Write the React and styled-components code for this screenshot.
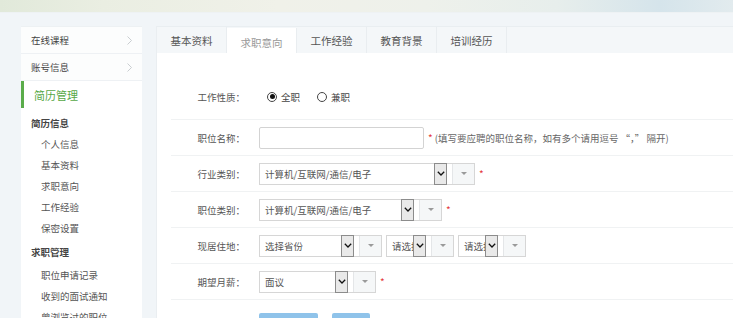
import React from "react";
import styled, { createGlobalStyle } from "styled-components";

const Global = createGlobalStyle`
  html, body {
    margin: 0;
    padding: 0;
    overflow: hidden;
    background: #f1f5f8;
    font-family: "Noto Sans CJK SC", "Noto Sans", sans-serif;
    color: #555;
  }
`;

const Banner = styled.div`
  height: 12px;
  background: linear-gradient(90deg, #e1e9da 0%, #eaeee2 14%, #f0f1e9 38%, #eef1eb 58%, #e7eeec 76%, #d5e4eb 90%, #e2ebee 100%);
  border-bottom: 1px solid #eef2f4;
`;

const Page = styled.div`
  display: flex;
  align-items: flex-start;
  gap: 14px;
  padding: 13px 0 0 21px;
`;

const Side = styled.div`
  width: 121px;
  flex: none;
  background: #fff;
  height: 320px;
  border-top: 1px solid #edf1f3;
`;

const NavRow = styled.div`
  display: flex;
  align-items: center;
  justify-content: space-between;
  height: 26px;
  padding: 0 10px;
  border-bottom: 1px solid #eef1f4;
  font-size: 9.5px;
  color: #444;
  background: #fcfdfd;
`;

const ActiveRow = styled.div`
  height: 27px;
  display: flex;
  align-items: center;
  padding-left: 10px;
  border-left: 3px solid #5aac4a;
  font-size: 11px;
  color: #56a846;
`;

const SideTitle = styled.div`
  height: 22px;
  line-height: 22px;
  margin-top: ${(p) => p.$mt || 0}px;
  padding-left: 10px;
  font-size: 9.5px;
  font-weight: bold;
  color: #444;
`;

const SideGroup = styled.div`
  margin-top: ${(p) => p.$mt || 0}px;
`;

const SideItem = styled.div`
  height: 21px;
  line-height: 21px;
  padding-left: 20px;
  font-size: 9.5px;
  color: #555;
  white-space: nowrap;
`;

const Main = styled.div`
  flex: 1;
  min-width: 0;
  background: #fff;
  height: 320px;
  border-left: 1px solid #eaeef1;
`;

const Tabs = styled.div`
  display: flex;
  height: 26px;
  background: #f4f7f9;
  border-top: 1px solid #e9eef1;
`;

const Tab = styled.div`
  width: 70px;
  flex: none;
  border-right: 1px solid #e9edf0;
  display: flex;
  align-items: center;
  justify-content: center;
  font-size: 10.5px;
  color: ${(p) => (p.$active ? "#999" : "#555")};
  background: ${(p) => (p.$active ? "#fff" : "transparent")};
  padding-top: ${(p) => (p.$active ? 3 : 0)}px;
  box-sizing: border-box;
  margin-top: ${(p) => (p.$active ? 1 : 0)}px;
`;

const Form = styled.div`
  padding-top: 31px;
`;

const Row = styled.div`
  display: flex;
  align-items: center;
  height: ${(p) => p.$h || 35}px;
  box-sizing: content-box;
  padding-bottom: ${(p) => p.$pb || 0}px;
  margin-left: 14px;
  border-bottom: 1px solid #f0f2f3;
`;

const Label = styled.div`
  width: 74px;
  flex: none;
  text-align: right;
  font-size: 9.5px;
  color: #555;
  margin-right: 14px;
  white-space: nowrap;
`;

const Radios = styled.div`
  display: flex;
  align-items: center;
  gap: 17px;
  padding-left: 8px;
`;

const RadioItem = styled.label`
  display: flex;
  align-items: center;
  gap: 4px;
  font-size: 9.5px;
  color: #444;
`;

const Circle = styled.span`
  width: 10px;
  height: 10px;
  box-sizing: border-box;
  border: 1px solid #444;
  border-radius: 50%;
  display: flex;
  align-items: center;
  justify-content: center;
  &::after {
    content: "";
    width: 5px;
    height: 5px;
    border-radius: 50%;
    background: ${(p) => (p.$on ? "#111" : "transparent")};
  }
`;

const Input = styled.input`
  width: 165px;
  height: 22px;
  box-sizing: border-box;
  border: 1px solid #d3d3d3;
  border-radius: 2px;
  outline: none;
  font-size: 9.5px;
`;

const Star = styled.span`
  color: #e4393c;
  font-size: 10px;
  margin-left: 4px;
`;

const Hint = styled.span`
  font-size: 9.5px;
  color: #666;
  margin-left: 2px;
  white-space: nowrap;
`;

const SelectBox = styled.div`
  display: flex;
  width: ${(p) => p.$w}px;
  height: 22px;
  box-sizing: border-box;
  border: 1px solid #d6d6d6;
  background: #fff;
  flex: none;
  margin-right: ${(p) => p.$mr || 0}px;
`;

const SelectText = styled.div`
  flex: 1;
  min-width: 0;
  overflow: hidden;
  white-space: nowrap;
  padding-left: 5px;
  line-height: 20px;
  font-size: 9.5px;
  color: #555;
`;

const Arrow = styled.div`
  width: 13px;
  flex: none;
  box-sizing: border-box;
  border: 1px solid #8c8c8c;
  background: #e9e9e9;
  margin: -1px 5px -1px 0;
  display: flex;
  align-items: center;
  justify-content: center;
`;

const Drop = styled.div`
  width: 21px;
  flex: none;
  background: #f5f7f8;
  border-left: 1px solid #e4e6e8;
  display: flex;
  align-items: center;
  justify-content: center;
  &::after {
    content: "";
    border-left: 3px solid transparent;
    border-right: 3px solid transparent;
    border-top: 3px solid #9a9a9a;
  }
`;

const Buttons = styled.div`
  display: flex;
  gap: 14px;
  padding: 13px 0 0 102px;
`;

const Btn = styled.button`
  width: ${(p) => p.$w}px;
  height: 32px;
  border: none;
  border-radius: 2px;
  background: #8fc3ea;
  color: #fff;
  font-family: inherit;
  font-size: 10px;
  padding: 12px 0 0;
`;

const Chev = () => (
  <svg width="5" height="9" viewBox="0 0 5 9">
    <path d="M0.5 0.5 L4.5 4.5 L0.5 8.5" fill="none" stroke="#c4c8cc" strokeWidth="0.9" />
  </svg>
);

const Down = () => (
  <svg width="8" height="5" viewBox="0 0 8 5">
    <path d="M0.8 0.8 L4 4 L7.2 0.8" fill="none" stroke="#111" strokeWidth="1.3" />
  </svg>
);

function Select({ w, text, mr }) {
  return (
    <SelectBox $w={w} $mr={mr}>
      <SelectText>{text}</SelectText>
      <Arrow>
        <Down />
      </Arrow>
      <Drop />
    </SelectBox>
  );
}

const tabs = ["基本资料", "求职意向", "工作经验", "教育背景", "培训经历"];

export default function App() {
  return (
    <>
      <Global />
      <Banner />
      <Page>
        <Side>
          <NavRow>
            在线课程
            <Chev />
          </NavRow>
          <NavRow>
            账号信息
            <Chev />
          </NavRow>
          <ActiveRow>简历管理</ActiveRow>
          <SideTitle $mt={4}>简历信息</SideTitle>
          {["个人信息", "基本资料", "求职意向", "工作经验", "保密设置"].map((t) => (
            <SideItem key={t}>{t}</SideItem>
          ))}
          <SideTitle $mt={2}>求职管理</SideTitle>
          <SideGroup $mt={2}>
            {["职位申请记录", "收到的面试通知", "曾浏览过的职位"].map((t) => (
              <SideItem key={t}>{t}</SideItem>
            ))}
          </SideGroup>
        </Side>
        <Main>
          <Tabs>
            {tabs.map((t, i) => (
              <Tab key={t} $active={i === 1}>
                {t}
              </Tab>
            ))}
          </Tabs>
          <Form>
            <Row $h={25} $pb={10}>
              <Label>工作性质：</Label>
              <Radios>
                <RadioItem>
                  <Circle $on />
                  全职
                </RadioItem>
                <RadioItem>
                  <Circle />
                  兼职
                </RadioItem>
              </Radios>
            </Row>
            <Row>
              <Label>职位名称：</Label>
              <Input />
              <Star>*</Star>
              <Hint>(填写要应聘的职位名称，如有多个请用逗号 “，” 隔开)</Hint>
            </Row>
            <Row>
              <Label>行业类别：</Label>
              <Select w={216} text="计算机/互联网/通信/电子" />
              <Star>*</Star>
            </Row>
            <Row>
              <Label>职位类别：</Label>
              <Select w={183} text="计算机/互联网/通信/电子" />
              <Star>*</Star>
            </Row>
            <Row>
              <Label>现居住地：</Label>
              <Select w={123} text="选择省份" mr={4} />
              <Select w={68} text="请选择" mr={4} />
              <Select w={68} text="请选择" />
            </Row>
            <Row>
              <Label>期望月薪：</Label>
              <Select w={117} text="面议" />
              <Star>*</Star>
            </Row>
            <Buttons>
              <Btn $w={59}>保存并继续</Btn>
              <Btn $w={38}>保存</Btn>
            </Buttons>
          </Form>
        </Main>
      </Page>
    </>
  );
}
